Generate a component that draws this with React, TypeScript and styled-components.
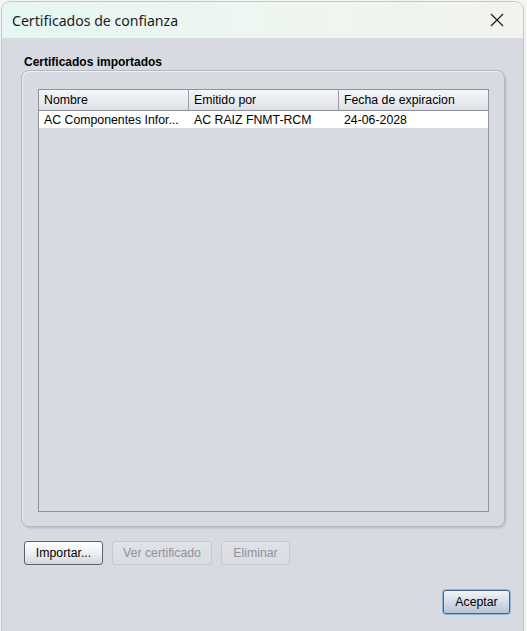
import React from 'react';
import styled, { createGlobalStyle } from 'styled-components';

const GlobalStyle = createGlobalStyle`
  html, body {
    margin: 0;
    padding: 0;
    background: #f3f3f1;
    overflow: hidden;
  }
  #root {
    height: 631px;
  }
`;

const Desktop = styled.div`
  height: 631px;
  padding: 2px 4px 0 2px;
  box-sizing: border-box;
  background: #f3f3f1;
`;

const Window = styled.div`
  width: 521px;
  height: 629px;
  display: flex;
  flex-direction: column;
  border-radius: 8px 8px 0 0;
  overflow: hidden;
  background: #d7dae1;
  box-shadow: 0 0 0 1px #c4c6cb;
`;

const TitleBar = styled.div`
  height: 36px;
  flex-shrink: 0;
  display: flex;
  align-items: center;
  justify-content: space-between;
  padding: 0 10px;
  background: linear-gradient(90deg, #e6f6f4 0%, #eef6f0 50%, #f2f3ef 100%);
`;

const Title = styled.div`
  font-family: 'Noto Sans', 'Open Sans', sans-serif;
  font-size: 14.1px;
  color: #1b1b1b;
`;

const CloseIcon = styled.svg`
  width: 16px;
  height: 16px;
  margin-right: 8px;
`;

const Body = styled.div`
  flex: 1;
  display: flex;
  flex-direction: column;
  padding: 0 18px 0 19px;
  font-family: 'Liberation Sans', Arial, sans-serif;
  font-size: 12px;
  color: #000;
`;

const GroupLabel = styled.div`
  margin-top: 16px;
  height: 16px;
  padding-left: 3px;
  font-weight: bold;
  font-size: 12px;
  line-height: 16px;
`;

const GroupBox = styled.div`
  height: 457px;
  box-sizing: border-box;
  padding: 18px 15px 14px 16px;
  border: 1px solid #b3b7bf;
  border-radius: 8px;
  box-shadow: inset 1px 1px 0 #eef0f3, 1px 1px 0 #c0c3c9, 2px 2px 1px #c9ccd2;
  display: flex;
`;

const Table = styled.div`
  flex: 1;
  border: 1px solid #8d929b;
  display: flex;
  flex-direction: column;
  background: #d7dae1;
  font-size: 12.3px;
`;

const Row = styled.div<{ $header?: boolean }>`
  display: grid;
  grid-template-columns: 150px 150px 1fr;
  height: ${p => (p.$header ? '20px' : '17px')};
  background: ${p => (p.$header ? 'linear-gradient(180deg, #f4f5f7 0%, #e8eaee 60%, #dcdfe4 100%)' : '#ffffff')};
  border-bottom: ${p => (p.$header ? '1px solid #8d929b' : 'none')};
`;

const Cell = styled.div<{ $header?: boolean; $last?: boolean }>`
  padding-left: 5px;
  display: flex;
  align-items: center;
  white-space: nowrap;
  overflow: hidden;
  border-right: ${p => (p.$header && !p.$last ? '1px solid #9a9ea6' : 'none')};
`;

const ButtonRow = styled.div`
  display: flex;
  gap: 9px;
  margin-top: 14px;
  padding-left: 3px;
`;

const Button = styled.button<{ $width: number; $primary?: boolean }>`
  width: ${p => p.$width}px;
  height: 24px;
  padding: 0;
  font-family: 'Liberation Sans', Arial, sans-serif;
  font-size: 12.3px;
  color: #000;
  border-radius: 3px;
  border: 1px solid #5f626a;
  background: linear-gradient(180deg, #ffffff 0%, #eef0f3 50%, #d3d6dc 100%);
  cursor: default;

  &:disabled {
    color: #8f939a;
    border-color: #c6c9cf;
    background: linear-gradient(180deg, #dfe2e7 0%, #d9dce2 100%);
  }

  ${p =>
    p.$primary &&
    `
    border-color: #44668a;
    box-shadow: 0 0 0 1px #8fb4d8;
    background: linear-gradient(180deg, #f1f4f8 0%, #d5dde6 50%, #b8c5d3 100%);
  `}
`;

const Footer = styled.div`
  display: flex;
  justify-content: flex-end;
  margin-top: 25px;
  margin-right: -5px;
`;

const columns = ['Nombre', 'Emitido por', 'Fecha de expiracion'];
const rows = [['AC Componentes Infor...', 'AC RAIZ FNMT-RCM', '24-06-2028']];

const App: React.FC = () => {
  return (
    <>
      <GlobalStyle />
      <Desktop>
        <Window>
          <TitleBar>
            <Title>Certificados de confianza</Title>
            <CloseIcon viewBox="0 0 16 16">
              <path d="M2 2 L14 14 M14 2 L2 14" stroke="#1b1b1b" strokeWidth="1.2" fill="none" />
            </CloseIcon>
          </TitleBar>
          <Body>
            <GroupLabel>Certificados importados</GroupLabel>
            <GroupBox>
              <Table>
                <Row $header>
                  {columns.map((c, i) => (
                    <Cell key={c} $header $last={i === columns.length - 1}>{c}</Cell>
                  ))}
                </Row>
                {rows.map((r, i) => (
                  <Row key={i}>
                    {r.map((v, j) => (
                      <Cell key={j}>{v}</Cell>
                    ))}
                  </Row>
                ))}
              </Table>
            </GroupBox>
            <ButtonRow>
              <Button $width={79}>Importar...</Button>
              <Button $width={100} disabled>Ver certificado</Button>
              <Button $width={69} disabled>Eliminar</Button>
            </ButtonRow>
            <Footer>
              <Button $width={67} $primary>Aceptar</Button>
            </Footer>
          </Body>
        </Window>
      </Desktop>
    </>
  );
};

export default App;
